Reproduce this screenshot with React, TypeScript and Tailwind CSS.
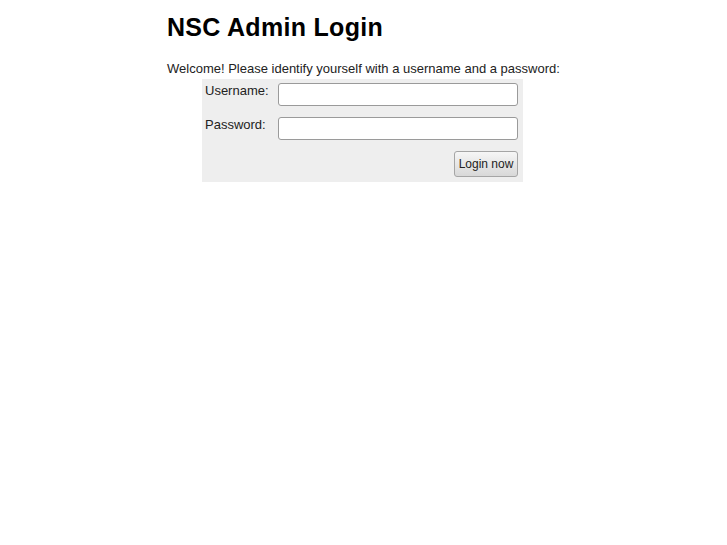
import React from "react";

export default function App() {
  return (
    <div className="min-h-[545px] bg-white text-black" style={{ fontFamily: '"Liberation Sans", Arial, sans-serif' }}>
      <div className="mx-auto w-[393px] pt-[13px]">
        <h1 className="text-[25px] leading-[28px] font-bold m-0 tracking-[0.3px]">NSC Admin Login</h1>
        <p className="mt-[20px] text-[13px] leading-[15px] text-[#222]">
          Welcome! Please identify yourself with a username and a password:
        </p>
        <div className="ml-[35px] mt-[3px] w-[321px] bg-[#eeeeee] pt-[4px] pb-[5px] pl-[3px] pr-[5px] flex flex-col">
          <div className="flex items-start h-[23px]">
            <label className="w-[73px] text-[13px] leading-[15px] pt-0 text-[#222]">Username:</label>
            <input type="text" className="w-[240px] h-[23px] bg-white border border-[#9a9a9a] rounded-[3px] outline-none" />
          </div>
          <div className="flex items-start h-[23px] mt-[11px]">
            <label className="w-[73px] text-[13px] leading-[15px] pt-0 text-[#222]">Password:</label>
            <input type="password" className="w-[240px] h-[23px] bg-white border border-[#9a9a9a] rounded-[3px] outline-none" />
          </div>
          <div className="flex justify-end mt-[11px]">
            <button className="w-[64px] h-[26px] text-[12px] text-[#222] border border-[#a5a5a5] rounded-[3px] bg-gradient-to-b from-[#f6f6f6] to-[#d8d8d8]">
              Login now
            </button>
          </div>
        </div>
      </div>
    </div>
  );
}
